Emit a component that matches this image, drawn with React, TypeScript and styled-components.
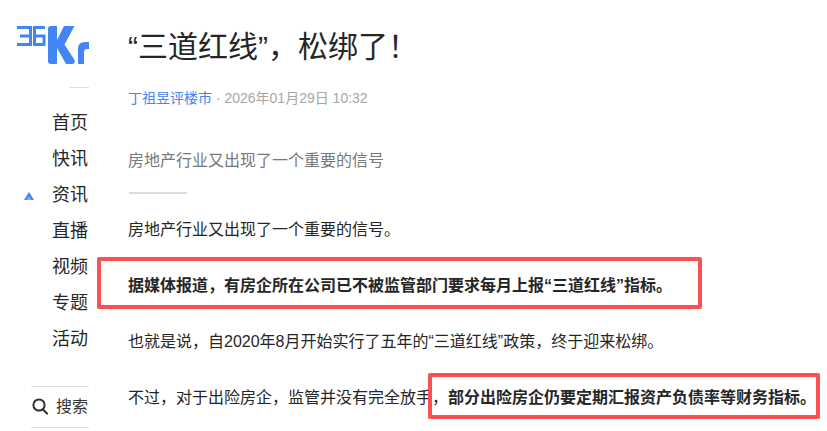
import React from "react";
import styled, { createGlobalStyle } from "styled-components";

const Global = createGlobalStyle`
  html, body { margin: 0; padding: 0; background: #fff; overflow: hidden; }
  body { font-family: "Liberation Sans", "Noto Sans CJK SC", sans-serif; }
`;
const Page = styled.div`
  position: relative;
  width: 827px;
  height: 431px;
  display: flex;
  overflow: hidden;
`;
const Sidebar = styled.aside`
  width: 89px;
  flex: none;
  display: flex;
  flex-direction: column;
  align-items: flex-end;
`;
const LogoLink = styled.a`
  display: block;
  width: 72px;
  height: 40px;
  margin: 24px 0 23px;
`;
const ShortRule = styled.div`
  width: 20px;
  height: 1px;
  background: #e0e0e0;
`;
const Nav = styled.nav`
  display: flex;
  flex-direction: column;
  width: 89px;
  margin-top: 17px;
  overflow: hidden;
`;
const NavItem = styled.a`
  position: relative;
  height: 36px;
  line-height: 36px;
  padding-left: 52px;
  font-size: 18px;
  color: #262626;
  white-space: nowrap;
`;
const Marker = styled.svg`
  position: absolute;
  left: 24px;
  top: 15px;
  width: 10px;
  height: 8px;
`;
const SearchBox = styled.div`
  margin-top: 29px;
  width: 58px;
  height: 42px;
  border-top: 1px solid #e0e0e0;
  border-bottom: 1px solid #e0e0e0;
  display: flex;
  align-items: center;
  gap: 8px;
  padding: 0 0 4px 1px;
  box-sizing: border-box;
  font-size: 16px;
  color: #333;
  white-space: nowrap;
  overflow: hidden;
`;
const SearchIcon = styled.svg`
  flex: none;
  margin-top: 2px;
`;
const Article = styled.main`
  flex: 1;
  padding: 23px 0 0 39px;
  min-width: 0;
`;
const Title = styled.h1`
  margin: 0;
  font-size: 30px;
  line-height: 48px;
  font-weight: 400;
  color: #262626;
  white-space: nowrap;
`;
const Meta = styled.div`
  margin-top: 17px;
  font-size: 14px;
  line-height: 20px;
  color: #a6a6a6;
  white-space: nowrap;
`;
const Author = styled.a`
  color: #4285f4;
`;
const Summary = styled.p`
  margin: 41px 0 0;
  font-size: 16px;
  line-height: 24px;
  color: #787878;
  white-space: nowrap;
`;
const Divider = styled.div`
  width: 58px;
  height: 2px;
  margin: 19px 0 0 1px;
  background: #dcdcdc;
`;
const Body = styled.div`
  margin-top: 24px;
  display: flex;
  flex-direction: column;
  gap: 32px;
`;
const Para = styled.p`
  margin: 0;
  font-size: 16px;
  line-height: 24px;
  color: #262626;
  white-space: nowrap;
`;
const Strong = styled.strong`
  font-weight: 700;
`;
const RedBox = styled.div<{ $x: number; $y: number; $w: number; $h: number }>`
  position: absolute;
  left: ${(p) => p.$x}px;
  top: ${(p) => p.$y}px;
  width: ${(p) => p.$w}px;
  height: ${(p) => p.$h}px;
  box-sizing: border-box;
  border: 4px solid #fb5050;
  border-radius: 2px;
`;

export default function App() {
  return (
    <Page>
      <Global />
      <Sidebar>
        <LogoLink aria-label="36Kr">
          <svg width="72" height="40" viewBox="0 0 72 40">
            <g fill="none" stroke="#4285f4" strokeWidth="3">
              <path d="M0 3.500h13.500v17H0M3 12h10.500" />
              <path d="M28 3.500H17.500v17H27V12h-9" />
            </g>
            <path fill="#4285f4" d="M31 5q0-3 3-3h6v14L47 2h10.500L47.500 20.500 57.500 36q1 4-2.500 4h-6L40 24v16h-6q-3 0-3-3z" />
            <path fill="#4285f4" d="M61 40V25q0-7 7-7h4v7h-2q-3 0-3 3v12z" />
          </svg>
        </LogoLink>
        <ShortRule />
        <Nav>
          <NavItem>首页</NavItem>
          <NavItem>快讯</NavItem>
          <NavItem>
            <Marker viewBox="0 0 10 8">
              <path fill="#4285f4" d="M5 0 10 8H7L5 5 3 8H0z" />
              <path fill="#7eaaf8" d="M5 5 7 8H3z" />
            </Marker>
            资讯
          </NavItem>
          <NavItem>直播</NavItem>
          <NavItem>视频</NavItem>
          <NavItem>专题</NavItem>
          <NavItem>活动</NavItem>
        </Nav>
        <SearchBox>
          <SearchIcon width="16" height="17" viewBox="0 0 16 17">
            <circle cx="7" cy="7" r="5.6" fill="none" stroke="#333" strokeWidth="2" />
            <path d="M11 11.500 15 15.500" stroke="#333" strokeWidth="2.200" strokeLinecap="round" />
          </SearchIcon>
          搜索
        </SearchBox>
      </Sidebar>
      <Article>
        <Title>“三道红线”，松绑了！</Title>
        <Meta>
          <Author>丁祖昱评楼市</Author> · 2026年01月29日 10:32
        </Meta>
        <Summary>房地产行业又出现了一个重要的信号</Summary>
        <Divider />
        <Body>
          <Para>房地产行业又出现了一个重要的信号。</Para>
          <Para>
            <Strong>据媒体报道，有房企所在公司已不被监管部门要求每月上报“三道红线”指标。</Strong>
          </Para>
          <Para>也就是说，自2020年8月开始实行了五年的“三道红线”政策，终于迎来松绑。</Para>
          <Para>
            不过，对于出险房企，监管并没有完全放手，
            <Strong>部分出险房企仍要定期汇报资产负债率等财务指标。</Strong>
          </Para>
        </Body>
      </Article>
      <RedBox $x={97} $y={257} $w={605} $h={52} />
      <RedBox $x={428} $y={373} $w={392} $h={46} />
    </Page>
  );
}
